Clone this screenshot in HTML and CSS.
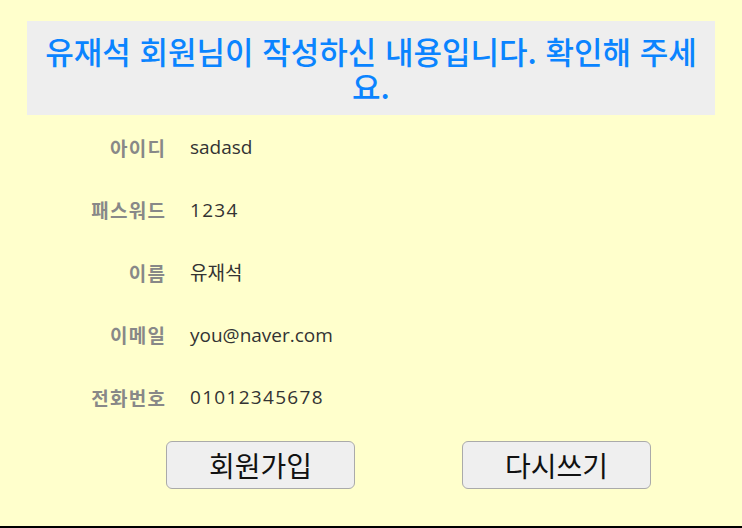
FILE: index.html
```html
<!DOCTYPE html>
<html lang="ko">
<head>
<meta charset="utf-8">
<link rel="stylesheet" href="styles.css">
</head>
<body>
<div class="page">
  <h1 class="title">유재석 회원님이 작성하신 내용입니다. 확인해 주세요.</h1>
  <div class="info">
    <div class="label">아이디</div><div class="value">sadasd</div>
    <div class="label">패스워드</div><div class="value num">1234</div>
    <div class="label">이름</div><div class="value">유재석</div>
    <div class="label">이메일</div><div class="value">you@naver.com</div>
    <div class="label">전화번호</div><div class="value num">01012345678</div>
  </div>
  <div class="actions">
    <button class="btn" type="button">회원가입</button>
    <button class="btn" type="button">다시쓰기</button>
  </div>
</div>
</body>
</html>
```

FILE: styles.css
```css
html, body {
  margin: 0;
  padding: 0;
  background: #ffffcc;
}
body {
  font-family: "Noto Sans CJK KR", "Noto Sans", sans-serif;
}
.page {
  box-sizing: border-box;
  height: 528px;
  padding: 21px 27px 0;
  border-bottom: 2px solid #000;
}
.title {
  margin: 0;
  background: #eeeeee;
  color: #0a84ff;
  font-size: 31px;
  font-weight: 500;
  line-height: 35px;
  text-align: center;
  padding: 12px 14px;
}
.info {
  display: grid;
  grid-template-columns: 138px 1fr;
  column-gap: 25px;
  grid-auto-rows: 62.5px;
  align-items: center;
  padding-top: 1px;
}
.label {
  text-align: right;
  color: #888888;
  font-weight: 700;
  font-size: 19px;
  letter-spacing: 1.3px;
  margin-right: -1.3px;
}
.value {
  color: #333333;
  font-family: "Open Sans", "Noto Sans CJK KR", sans-serif;
  font-size: 19px;
}
.num {
  letter-spacing: 1.3px;
}
.actions {
  display: flex;
  gap: 107px;
  padding-left: 139px;
  padding-top: 12px;
}
.btn {
  width: 189px;
  height: 48px;
  background: #efefef;
  border: 1px solid #aaaaaa;
  border-radius: 6px;
  font-family: "Noto Sans CJK KR", sans-serif;
  font-size: 28px;
  color: #111;
  padding: 0;
}
```
